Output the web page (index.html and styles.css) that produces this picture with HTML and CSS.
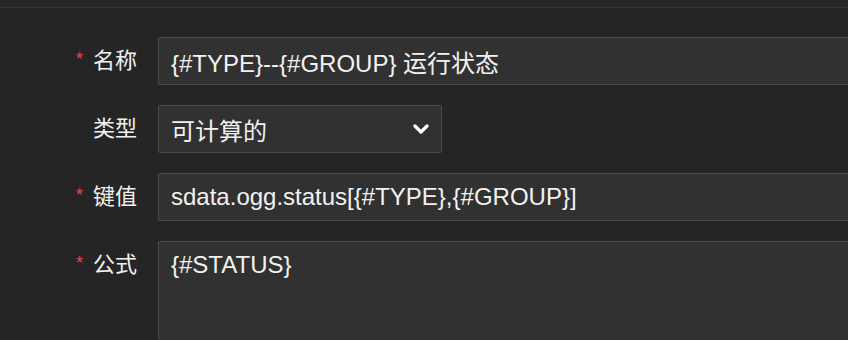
FILE: index.html
```html
<!DOCTYPE html>
<html lang="zh">
<head>
    <meta charset="UTF-8" />
    <title>监控项</title>
    <link rel="stylesheet" href="styles.css">
</head>
<body>
  <div class="top-bar"></div>

  <form class="item-form">
    <div class="form-row">
      <label class="form-label required">名称</label>
      <input class="form-input" type="text" value="{#TYPE}--{#GROUP} 运行状态" />
    </div>

    <div class="form-row">
      <label class="form-label">类型</label>
      <div class="form-select">
        <span>可计算的</span>
        <svg class="chevron" width="16" height="12" viewBox="0 0 16 12">
          <path d="M2 3 L8 9 L14 3" fill="none" stroke="#fff" stroke-width="3.2" stroke-linecap="round" stroke-linejoin="round" />
        </svg>
      </div>
    </div>

    <div class="form-row">
      <label class="form-label required">键值</label>
      <input class="form-input" type="text" value="sdata.ogg.status[{#TYPE},{#GROUP}]" />
    </div>

    <div class="form-row">
      <label class="form-label required">公式</label>
      <textarea class="form-input form-textarea">{#STATUS}</textarea>
    </div>
  </form>
</body>
</html>
```

FILE: styles.css
```css
* {
    margin: 0;
    padding: 0;
    box-sizing: border-box;
}

html, body {
    overflow: hidden;
}

body {
    background: #252525;
    color: #f0f0f0;
    font-family: 'Liberation Sans', Arial, 'Noto Sans CJK SC', sans-serif;
    font-size: 24px;
    height: 340px;
}

.top-bar {
    height: 8px;
    background: #262626;
    border-bottom: 1px solid #363636;
}

.item-form {
    display: flex;
    flex-direction: column;
    gap: 20px;
    padding-top: 29px;
}

.form-row {
    display: flex;
    align-items: flex-start;
    gap: 21px;
}

.form-label {
    width: 137px;
    height: 48px;
    line-height: 48px;
    text-align: right;
    font-size: 22px;
    color: #f2f2f2;
    flex-shrink: 0;
}

    .form-label.required::before {
        content: '*';
        color: #e5484d;
        margin-right: 10px;
        font-size: 18px;
        position: relative;
        top: -3px;
    }

.form-input {
    flex: 1;
    height: 48px;
    background: #313131;
    border: 1px solid #4a4a4a;
    border-right: none;
    border-radius: 2px 0 0 2px;
    color: #f2f2f2;
    font: inherit;
    padding: 0 12px;
    outline: none;
}

.form-select {
    width: 284px;
    height: 48px;
    background: #313131;
    border: 1px solid #4a4a4a;
    border-radius: 2px;
    display: flex;
    align-items: center;
    justify-content: space-between;
    padding: 0 12px 0 12px;
}

.form-textarea {
    height: 99px;
    border-bottom: none;
    padding: 8px 12px;
    resize: none;
    line-height: 30px;
}
```
